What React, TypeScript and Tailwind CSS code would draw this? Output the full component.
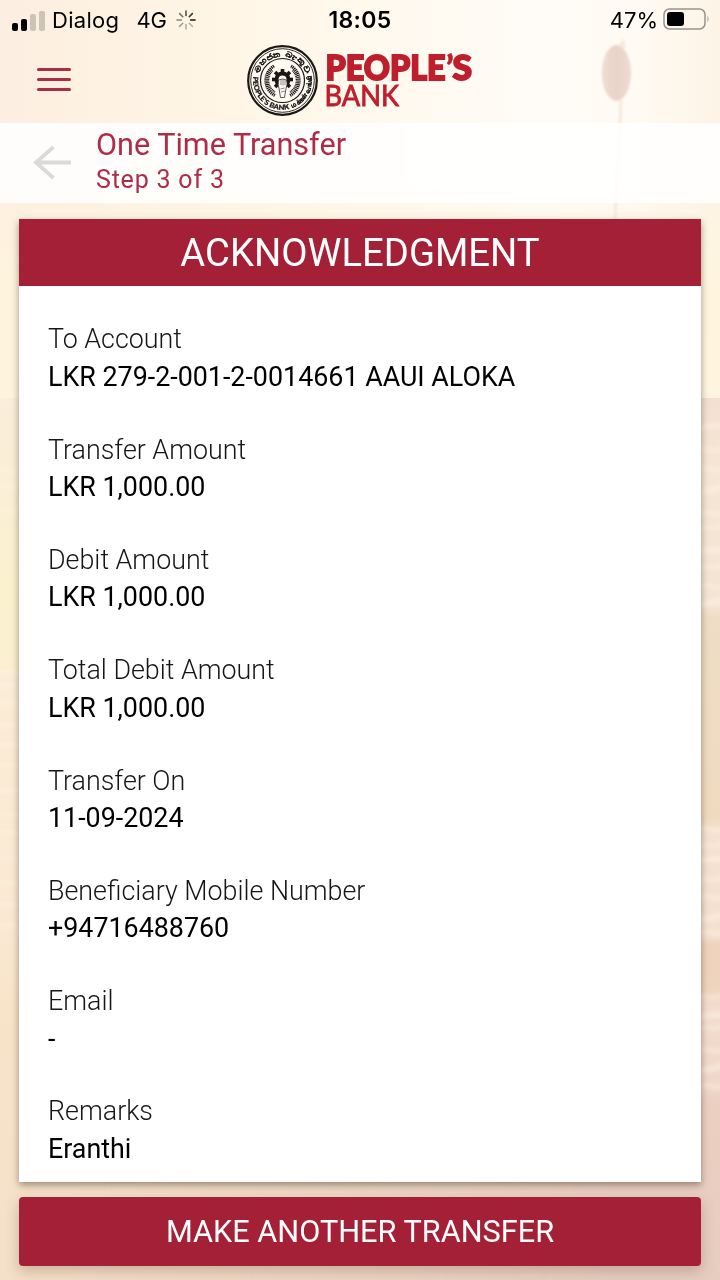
const details = [
  { label: "To Account", value: "LKR 279-2-001-2-0014661 AAUI ALOKA" },
  { label: "Transfer Amount", value: "LKR 1,000.00" },
  { label: "Debit Amount", value: "LKR 1,000.00" },
  { label: "Total Debit Amount", value: "LKR 1,000.00" },
  { label: "Transfer On", value: "11-09-2024" },
  { label: "Beneficiary Mobile Number", value: "+94716488760" },
  { label: "Email", value: "-" },
  { label: "Remarks", value: "Eranthi" },
];

const wavesRight = [425, 449, 468, 489, 512, 527, 549, 566, 585, 602, 828, 845, 858, 879, 896, 917, 931, 996, 1014, 1027, 1049, 1068, 1085];
const wavesLeft = [470, 486, 510, 672, 685, 702, 725, 744, 765, 790, 814, 832, 858, 882, 904, 925];

function Backdrop() {
  return (
    <svg className="absolute inset-0 h-full w-full" viewBox="0 0 720 1280" preserveAspectRatio="none" aria-hidden="true">
      <defs>
        <linearGradient id="sky" x1="0" x2="1" y1="0" y2="0">
          <stop offset="0" stopColor="#fceee0" />
          <stop offset="0.32" stopColor="#fff6e6" />
          <stop offset="0.75" stopColor="#fffcf7" />
          <stop offset="0.88" stopColor="#fffaf3" />
          <stop offset="1" stopColor="#fdf4e6" />
        </linearGradient>
        <linearGradient id="glow" x1="0" x2="0" y1="0" y2="1">
          <stop offset="0" stopColor="#fff5dd" stopOpacity="0.2" />
          <stop offset="0.5" stopColor="#fff5dd" stopOpacity="0.85" />
          <stop offset="1" stopColor="#fff5dd" stopOpacity="0.9" />
        </linearGradient>
        <linearGradient id="left" x1="0" x2="0" y1="0" y2="1">
          <stop offset="0" stopColor="#fbeeda" />
          <stop offset="0.13" stopColor="#fbefd4" />
          <stop offset="0.2" stopColor="#fbf1cf" />
          <stop offset="0.3" stopColor="#fbf0cf" />
          <stop offset="0.32" stopColor="#fbecd6" />
          <stop offset="0.6" stopColor="#fae8d2" />
          <stop offset="0.7" stopColor="#f8e4c9" />
          <stop offset="1" stopColor="#f4dfc9" />
        </linearGradient>
        <linearGradient id="right" x1="0" x2="0" y1="0" y2="1">
          <stop offset="0" stopColor="#f3dfd2" />
          <stop offset="0.08" stopColor="#f6e6d4" />
          <stop offset="0.235" stopColor="#f4e4d3" />
          <stop offset="0.25" stopColor="#efddc5" />
          <stop offset="0.475" stopColor="#efdac0" />
          <stop offset="0.49" stopColor="#f5e1d0" />
          <stop offset="0.61" stopColor="#f5e0d0" />
          <stop offset="0.62" stopColor="#efd3bc" />
          <stop offset="0.67" stopColor="#efd4be" />
          <stop offset="0.69" stopColor="#f3dccd" />
          <stop offset="0.78" stopColor="#f0d7c9" />
          <stop offset="0.8" stopColor="#ebcfc1" />
          <stop offset="1" stopColor="#e7cdc0" />
        </linearGradient>
        <linearGradient id="blend" x1="0" x2="1" y1="0" y2="0">
          <stop offset="0.1" stopColor="#fff" stopOpacity="0" />
          <stop offset="0.85" stopColor="#fff" />
        </linearGradient>
        <mask id="fade">
          <rect width="720" height="1280" fill="url(#blend)" />
        </mask>
        <linearGradient id="bud" x1="0" x2="1" y1="0" y2="0">
          <stop offset="0" stopColor="#efdcd3" />
          <stop offset="0.5" stopColor="#e9d4ca" />
          <stop offset="1" stopColor="#eedbd2" />
        </linearGradient>
        <filter id="soft" x="-20%" y="-20%" width="140%" height="140%">
          <feGaussianBlur stdDeviation="0.9" />
        </filter>
        <filter id="hazy" x="-20%" y="-20%" width="140%" height="140%">
          <feGaussianBlur stdDeviation="2" />
        </filter>
      </defs>
      <rect width="720" height="400" fill="url(#sky)" />
      <rect y="190" width="720" height="210" fill="url(#glow)" />
      <rect y="398" width="720" height="882" fill="url(#left)" />
      <g mask="url(#fade)">
        <rect y="398" width="720" height="882" fill="url(#right)" />
      </g>
      <g filter="url(#hazy)">
        {wavesRight.map((y, i) => (
          <path key={y} d={`M696 ${y + 3}q9 ${i % 3 ? -4 : -1} 14 -2t16 ${i % 2 ? -4 : 1}`} fill="none" stroke="#fff3e5" strokeWidth={i % 3 ? 4 : 6} opacity="0.55" />
        ))}
        {wavesLeft.map((y) => (
          <path key={y} d={`M-4 ${y + 2}q9 -4 26 0`} fill="none" stroke="#fff8e8" strokeWidth="4" opacity="0.4" />
        ))}
      </g>
      <g filter="url(#soft)">
        <path d="M621 47l2 -7 1 8M621 100L619 140 615 219" fill="none" stroke="#f7e9dd" strokeWidth="3" />
        <ellipse cx="616.5" cy="73" rx="14.5" ry="28" fill="url(#bud)" />
      </g>
    </svg>
  );
}

function Spinner() {
  const shades = [0.75, 0.85, 1, 0.3, 0.3, 0.4, 0.5, 0.6];
  return (
    <svg width="20" height="20" viewBox="-10 -10 20 20" aria-hidden="true">
      {shades.map((o, i) => (
        <path key={i} d="M0 -4.6V-9" stroke="#1c1713" strokeWidth="1.6" strokeLinecap="round" opacity={o} transform={`rotate(${i * 45})`} />
      ))}
    </svg>
  );
}

function StatusBar() {
  return (
    <div className="grid h-10 grid-cols-3 items-center font-['Inter',sans-serif] text-[22px] text-black">
      <div className="flex items-center pl-3">
        <div className="flex h-[21px] items-end gap-[3px]">
          <span className="h-2 w-1.5 rounded-[2px] bg-black" />
          <span className="h-3 w-1.5 rounded-[2px] bg-black" />
          <span className="h-[17px] w-1.5 rounded-[2px] bg-[#cdc4b8]" />
          <span className="h-5 w-1.5 rounded-[2px] bg-[#cdc4b8]" />
        </div>
        <span className="ml-[7px] tracking-[0.300px]">Dialog</span>
        <span className="ml-[17px]">4G</span>
        <span className="ml-[9px]"><Spinner /></span>
      </div>
      <div className="text-center text-[23px] font-semibold tracking-[0.300px]">18:05</div>
      <div className="flex items-center justify-end pr-2.5">
        <span>47%</span>
        <svg className="ml-[5px] mt-[-2px]" width="47" height="22" viewBox="0 0 47 22" aria-hidden="true">
          <rect x="1" y="1" width="41" height="20" rx="5.5" fill="none" stroke="#96928c" strokeWidth="1.5" />
          <rect x="4" y="4" width="17" height="14" rx="3" fill="#000" />
          <path d="M44.5 7.5q2 3.500 0 7z" fill="#96928c" />
        </svg>
      </div>
    </div>
  );
}

function Logo() {
  const teeth = Array.from({ length: 8 }, (_, i) => i * 45);
  return (
    <svg width="228" height="74" viewBox="246 44 228 74" role="img" aria-label="People's Bank">
      <defs>
        <path id="ringTop" d="M258.300 80.500A24.200 24.200 0 0 1 306.700 80.500" />
        <path id="ringLow" d="M253.600 75.500A29.200 29.200 0 0 0 287.500 109.300" />
        <path id="ringRight" d="M288.500 109A29 29 0 0 0 310.500 71.500" />
      </defs>
      <circle cx="282.500" cy="80.500" r="34.300" fill="#fffaf0" stroke="#1a1715" strokeWidth="2.200" />
      <circle cx="282.500" cy="80.500" r="31.800" fill="none" stroke="#1a1715" strokeWidth="0.900" />
      <circle cx="282.500" cy="80.500" r="22" fill="none" stroke="#1a1715" strokeWidth="1.200" />
      <g fill="#1a1715" stroke="#1a1715" strokeWidth="0.200">
        <text className="font-sans text-[7.500px] font-bold"><textPath href="#ringTop" startOffset="7" textLength="62" lengthAdjust="spacingAndGlyphs">මහජන බැංකුව</textPath></text>
        <text className="font-['Lato'] text-[7px] font-black"><textPath href="#ringLow" startOffset="1" textLength="57" lengthAdjust="spacingAndGlyphs">PEOPLE'S BANK</textPath></text>
        <text className="font-sans text-[6.500px] font-bold"><textPath href="#ringRight" startOffset="4" textLength="42" lengthAdjust="spacingAndGlyphs">மக்கள் வங்கி</textPath></text>
        <circle cx="257" cy="72" r="0.800" />
        <circle cx="307.500" cy="72.500" r="0.800" />
        <circle cx="286.500" cy="106.500" r="0.800" />
      </g>
      <g fill="none" stroke="#1a1715" strokeWidth="3.200" strokeDasharray="1.200 0.700">
        <path d="M274 66A17 17 0 0 0 275 95.500" />
        <path d="M291 66A17 17 0 0 1 290 95.500" />
      </g>
      <g fill="none" stroke="#1a1715" strokeWidth="2" strokeDasharray="0.900 0.700">
        <path d="M272.500 70.500A13.500 13.500 0 0 0 275 92" />
        <path d="M292.500 70.500A13.500 13.500 0 0 1 290 92" />
      </g>
      <circle cx="282.500" cy="79.500" r="6" fill="none" stroke="#1a1715" strokeWidth="4" />
      {teeth.map((a) => (
        <rect key={a} x="280.700" y="69" width="3.600" height="3.800" fill="#1a1715" transform={`rotate(${a} 282.5 79.5)`} />
      ))}
      <path d="M278.500 80q-1 5 0.500 8.500l1.500 9h4l1.500 -9q2 -5 0.500 -8.500 -4 -2 -8 0z" fill="#fffaf0" stroke="#1a1715" strokeWidth="0.700" />
      <path d="M281 80v5M283 79.500v6M285 80v5M280.500 89l4 -1M281 92l4 -1" stroke="#1a1715" strokeWidth="0.500" />
      <text fill="#bf1e2d" stroke="#bf1e2d" className="font-['Lato',sans-serif]">
        <tspan x="325.500" y="79.500" textLength="120" lengthAdjust="spacingAndGlyphs" className="text-[34.500px] font-black" strokeWidth="1.900">PEOPLE</tspan>
        <tspan x="446" y="79.500" className="text-[34.500px] font-black" strokeWidth="0.500">’</tspan>
        <tspan x="452.500" y="79.500" textLength="19.500" lengthAdjust="spacingAndGlyphs" className="text-[34.500px] font-black" strokeWidth="1.900">S</tspan>
        <tspan x="324.500" y="105.700" textLength="74.500" lengthAdjust="spacingAndGlyphs" className="text-[29px]" strokeWidth="0.900">BANK</tspan>
      </text>
    </svg>
  );
}

export default function App() {
  return (
    <div className="relative h-[1280px] w-[720px] overflow-hidden bg-[#fdf2e0] font-['Roboto',sans-serif]">
      <Backdrop />
      <div className="relative flex h-full flex-col">
        <StatusBar />
        <header className="grid h-[83px] grid-cols-[1fr_228px_1fr] items-start pt-1">
          <button className="ml-[37px] mt-6 flex w-[34px] flex-col gap-[7.500px]" aria-label="Menu">
            <span className="h-[2.500px] w-full rounded-full bg-[#a82d46]" />
            <span className="h-[2.500px] w-full rounded-full bg-[#a82d46]" />
            <span className="h-[2.500px] w-full rounded-full bg-[#a82d46]" />
          </button>
          <Logo />
        </header>
        <section className="flex h-20 shrink-0 bg-white/85">
          <button className="ml-8 mt-[22px] h-9" aria-label="Back">
            <svg width="40" height="36" viewBox="0 0 40 36" fill="none" stroke="#dadada" strokeWidth="3.800" aria-hidden="true">
              <path d="M21.500 2L4 17.500 21.500 33M4 17.500H39" />
            </svg>
          </button>
          <div className="ml-6 pt-1 text-[#ad2d48]">
            <h1 className="text-[30.600px] leading-9">One Time Transfer</h1>
            <p className="text-[25px] leading-[33px] tracking-[0.800px]">Step 3 of 3</p>
          </div>
        </section>
        <main className="mx-[19px] mt-4 flex flex-col">
          <article className="h-[963px] bg-white shadow-[0_3px_7px_rgba(70,50,30,0.5)]">
            <h2 className="h-[67px] bg-[#a42037] text-center text-[38.250px] leading-[68.500px] text-white">ACKNOWLEDGMENT</h2>
            <dl className="flex flex-col gap-[35.300px] px-[29px] pt-[35.400px] text-[26.850px] leading-[37.500px]">
              {details.map(({ label, value }) => (
                <div key={label}>
                  <dt className="font-light text-[#161616]">{label}</dt>
                  <dd className="text-black">{value}</dd>
                </div>
              ))}
            </dl>
          </article>
          <button className="mt-[15px] h-[69px] rounded bg-[#a42037] pt-0.5 text-[30.700px] text-white shadow-[0_5px_14px_rgba(110,70,50,0.3)]">
            MAKE ANOTHER TRANSFER
          </button>
        </main>
      </div>
    </div>
  );
}
